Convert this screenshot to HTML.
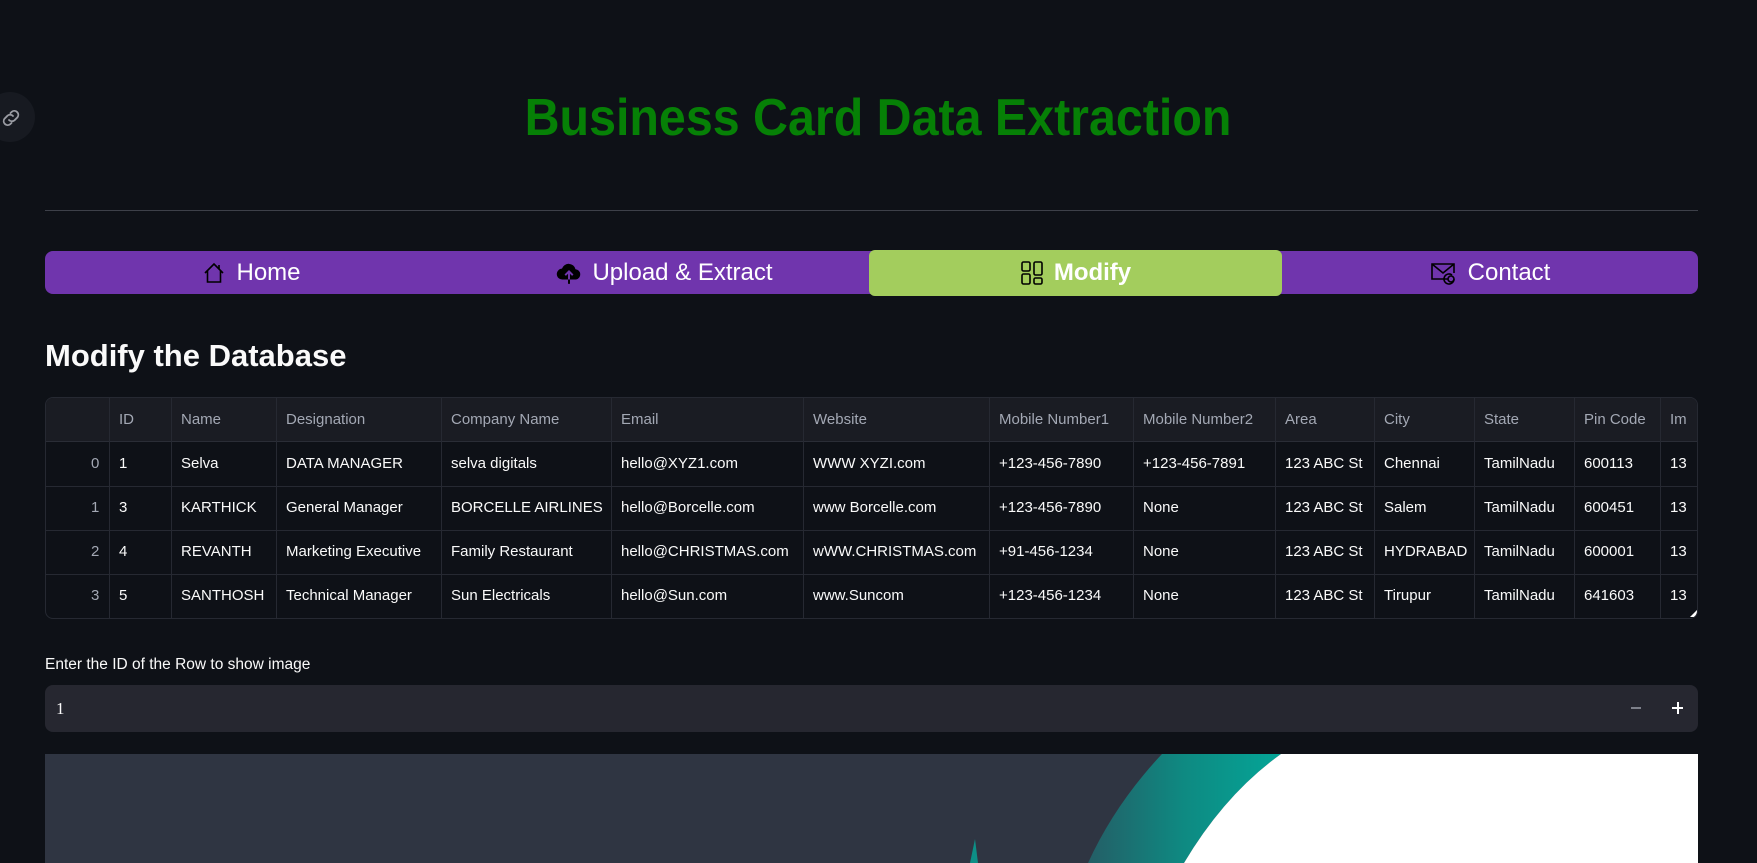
<!DOCTYPE html>
<html><head><meta charset="utf-8">
<style>
*{box-sizing:border-box;margin:0;padding:0}
html,body{width:1757px;height:863px;overflow:hidden;background:#0e1117;font-family:"Liberation Sans",sans-serif;color:#fafafa}
.abs{position:absolute}
.title{left:0;width:1757px;top:88px;text-align:center;height:60px}
.title span{display:inline-block;font-weight:bold;font-size:52px;color:#068006;transform:scaleX(0.93);white-space:nowrap;line-height:60px}
.hr{left:45px;width:1653px;top:210px;height:1px;background:#3d4049}
.nav{left:45px;top:251px;width:1653px;height:43px;background:#7035ad;border-radius:8px}
.tab{position:absolute;top:0;height:43px;display:flex;align-items:center;justify-content:center;font-size:24px;color:#fff}
.tab svg{margin-right:10px}
.act{background:#a3cd5d;top:-1px;height:46px;border-radius:6px;font-weight:bold}
h2{position:absolute;left:45px;top:338px;font-size:31px;font-weight:bold;line-height:36px}
.tbl{left:45px;top:397px;width:1653px;height:222px;border:1px solid #262932;border-radius:8px;overflow:hidden;background:#0e1117}
.hd{position:absolute;left:0;top:0;width:100%;height:44px;background:#1a1c23;border-bottom:1px solid #2a2d36}
.c{position:absolute;font-size:15px;line-height:44px;white-space:nowrap;padding-left:9px}
.h{color:#a3a8b4}
.vl{position:absolute;top:0;width:1px;height:222px;background:#262932}
.hl{position:absolute;left:0;width:100%;height:1px;background:#262932}
.lbl{left:45px;top:656px;font-size:15.5px;color:#fafafa}
.inp{left:45px;top:685px;width:1653px;height:47px;background:#262730;border-radius:8px}
.img{left:45px;top:754px;width:1653px;height:109px;overflow:hidden;background:#2f3542}
</style></head><body>

<div class="abs" style="left:-15px;top:92px;width:50px;height:50px;border-radius:25px;background:#171a21"></div>
<svg class="abs" style="left:0;top:107px" width="22" height="22" viewBox="0 0 22 22" fill="none" stroke="#9a9ca3" stroke-width="1.8" stroke-linecap="round"><path d="M9 13a4 4 0 0 0 5.5 0.3l3-3a4 4 0 0 0-5.6-5.6l-1.5 1.4"/><path d="M13 9a4 4 0 0 0-5.5-0.3l-3 3a4 4 0 0 0 5.6 5.6l1.5-1.4"/></svg>

<div class="abs title"><span>Business Card Data Extraction</span></div>
<div class="abs hr"></div>

<div class="abs nav">
  <div class="tab" style="left:0;width:413px">
    <svg width="24" height="24" viewBox="0 0 24 24" fill="none" stroke="#000" stroke-width="1.6"><path d="M3 12 L12 3 L21 12 M5.5 10 V21 H18.5 V10"/><path d="M17 4 V8"/></svg>Home</div>
  <div class="tab" style="left:413px;width:413px">
    <svg width="26" height="26" viewBox="0 0 24 24"><path d="M6 18 A5 5 0 0 1 5.5 8 A6.5 6.5 0 0 1 18 8.5 A4.8 4.8 0 0 1 18.5 18 Z" fill="#000"/><path d="M12 22 V11 M8.5 14 L12 10.5 L15.5 14" stroke="#7035ad" stroke-width="1.8" fill="none"/><path d="M12 18 V22" stroke="#000" stroke-width="1.8"/></svg>Upload &amp; Extract</div>
  <div class="tab act" style="left:824px;width:413px">
    <svg width="24" height="26" viewBox="0 0 24 26" fill="none" stroke="#000" stroke-width="1.6"><rect x="2" y="2" width="8" height="9" rx="1.5"/><rect x="14" y="2" width="8" height="13" rx="1.5"/><rect x="2" y="14" width="8" height="10" rx="1.5"/><rect x="14" y="18" width="8" height="6" rx="1.5"/></svg>Modify</div>
  <div class="tab" style="left:1237px;width:416px">
    <svg width="28" height="24" viewBox="0 0 28 24" fill="none" stroke="#000" stroke-width="1.6"><path d="M18 18 H2 V3 H24 V12"/><path d="M2 3 L13 12 L24 3"/><circle cx="21" cy="18" r="3"/><path d="M24 18 a5 5 0 1 1-2-4"/></svg>Contact</div>
</div>

<h2>Modify the Database</h2>

<div class="abs tbl">
  <div class="hd"></div>
  <div class="hl" style="top:88px"></div><div class="hl" style="top:132px"></div><div class="hl" style="top:176px"></div>
  <div class="vl" style="left:63px"></div><div class="vl" style="left:125px"></div><div class="vl" style="left:230px"></div><div class="vl" style="left:395px"></div><div class="vl" style="left:565px"></div><div class="vl" style="left:757px"></div><div class="vl" style="left:943px"></div><div class="vl" style="left:1087px"></div><div class="vl" style="left:1229px"></div><div class="vl" style="left:1328px"></div><div class="vl" style="left:1428px"></div><div class="vl" style="left:1528px"></div><div class="vl" style="left:1614px"></div>

  <div class="c h" style="left:64px;top:0">ID</div><div class="c h" style="left:126px;top:0">Name</div><div class="c h" style="left:231px;top:0">Designation</div><div class="c h" style="left:396px;top:0">Company Name</div><div class="c h" style="left:566px;top:0">Email</div><div class="c h" style="left:758px;top:0">Website</div><div class="c h" style="left:944px;top:0">Mobile Number1</div><div class="c h" style="left:1088px;top:0">Mobile Number2</div><div class="c h" style="left:1230px;top:0">Area</div><div class="c h" style="left:1329px;top:0">City</div><div class="c h" style="left:1429px;top:0">State</div><div class="c h" style="left:1529px;top:0">Pin Code</div><div class="c h" style="left:1615px;top:0">Im</div>

  <div class="c h" style="left:36px;top:44px">0</div><div class="c" style="left:64px;top:44px">1</div><div class="c" style="left:126px;top:44px">Selva</div><div class="c" style="left:231px;top:44px">DATA MANAGER</div><div class="c" style="left:396px;top:44px">selva digitals</div><div class="c" style="left:566px;top:44px">hello@XYZ1.com</div><div class="c" style="left:758px;top:44px">WWW XYZI.com</div><div class="c" style="left:944px;top:44px">+123-456-7890</div><div class="c" style="left:1088px;top:44px">+123-456-7891</div><div class="c" style="left:1230px;top:44px">123 ABC St</div><div class="c" style="left:1329px;top:44px">Chennai</div><div class="c" style="left:1429px;top:44px">TamilNadu</div><div class="c" style="left:1529px;top:44px">600113</div><div class="c" style="left:1615px;top:44px">13</div>

  <div class="c h" style="left:36px;top:88px">1</div><div class="c" style="left:64px;top:88px">3</div><div class="c" style="left:126px;top:88px">KARTHICK</div><div class="c" style="left:231px;top:88px">General Manager</div><div class="c" style="left:396px;top:88px">BORCELLE AIRLINES</div><div class="c" style="left:566px;top:88px">hello@Borcelle.com</div><div class="c" style="left:758px;top:88px">www Borcelle.com</div><div class="c" style="left:944px;top:88px">+123-456-7890</div><div class="c" style="left:1088px;top:88px">None</div><div class="c" style="left:1230px;top:88px">123 ABC St</div><div class="c" style="left:1329px;top:88px">Salem</div><div class="c" style="left:1429px;top:88px">TamilNadu</div><div class="c" style="left:1529px;top:88px">600451</div><div class="c" style="left:1615px;top:88px">13</div>

  <div class="c h" style="left:36px;top:132px">2</div><div class="c" style="left:64px;top:132px">4</div><div class="c" style="left:126px;top:132px">REVANTH</div><div class="c" style="left:231px;top:132px">Marketing Executive</div><div class="c" style="left:396px;top:132px">Family Restaurant</div><div class="c" style="left:566px;top:132px">hello@CHRISTMAS.com</div><div class="c" style="left:758px;top:132px">wWW.CHRISTMAS.com</div><div class="c" style="left:944px;top:132px">+91-456-1234</div><div class="c" style="left:1088px;top:132px">None</div><div class="c" style="left:1230px;top:132px">123 ABC St</div><div class="c" style="left:1329px;top:132px">HYDRABAD</div><div class="c" style="left:1429px;top:132px">TamilNadu</div><div class="c" style="left:1529px;top:132px">600001</div><div class="c" style="left:1615px;top:132px">13</div>

  <div class="c h" style="left:36px;top:176px">3</div><div class="c" style="left:64px;top:176px">5</div><div class="c" style="left:126px;top:176px">SANTHOSH</div><div class="c" style="left:231px;top:176px">Technical Manager</div><div class="c" style="left:396px;top:176px">Sun Electricals</div><div class="c" style="left:566px;top:176px">hello@Sun.com</div><div class="c" style="left:758px;top:176px">www.Suncom</div><div class="c" style="left:944px;top:176px">+123-456-1234</div><div class="c" style="left:1088px;top:176px">None</div><div class="c" style="left:1230px;top:176px">123 ABC St</div><div class="c" style="left:1329px;top:176px">Tirupur</div><div class="c" style="left:1429px;top:176px">TamilNadu</div><div class="c" style="left:1529px;top:176px">641603</div><div class="c" style="left:1615px;top:176px">13</div>
  <div class="abs" style="left:1638px;top:210px;width:14px;height:10px;background:#0e1117"></div>
  <svg class="abs" style="left:1644px;top:212px" width="7" height="7"><path d="M0 7 L7 0 V7Z" fill="#fff"/></svg>
</div>

<div class="abs lbl">Enter the ID of the Row to show image</div>
<div class="abs inp">
  <div class="abs" style="left:11px;top:0;line-height:47px;font-size:17px;font-family:'Liberation Serif',serif">1</div>
  <div class="abs" style="left:1586px;top:22px;width:10px;height:2px;background:#7d808a"></div>
  <div class="abs" style="left:1627px;top:22px;width:11px;height:2px;background:#fff"></div>
  <div class="abs" style="left:1631.5px;top:17px;width:2px;height:12px;background:#fff"></div>
</div>

<div class="abs img">
<svg width="1653" height="109" viewBox="0 0 1653 109">
<defs><linearGradient id="g" x1="0" x2="1"><stop offset="0" stop-color="#245e66"/><stop offset="0.5" stop-color="#0e8a82"/><stop offset="1" stop-color="#04a597"/></linearGradient></defs>
<path d="M1117 0 Q1070 50 1043 109 L1139 109 Q1180 40 1236 0 Z" fill="url(#g)"/>
<path d="M1236 0 Q1180 40 1139 109 L1653 109 L1653 0 Z" fill="#fff"/>
<path d="M925 109 L930 85 L933 109 Z" fill="#0d8f86"/>
</svg>
</div>

</body></html>
